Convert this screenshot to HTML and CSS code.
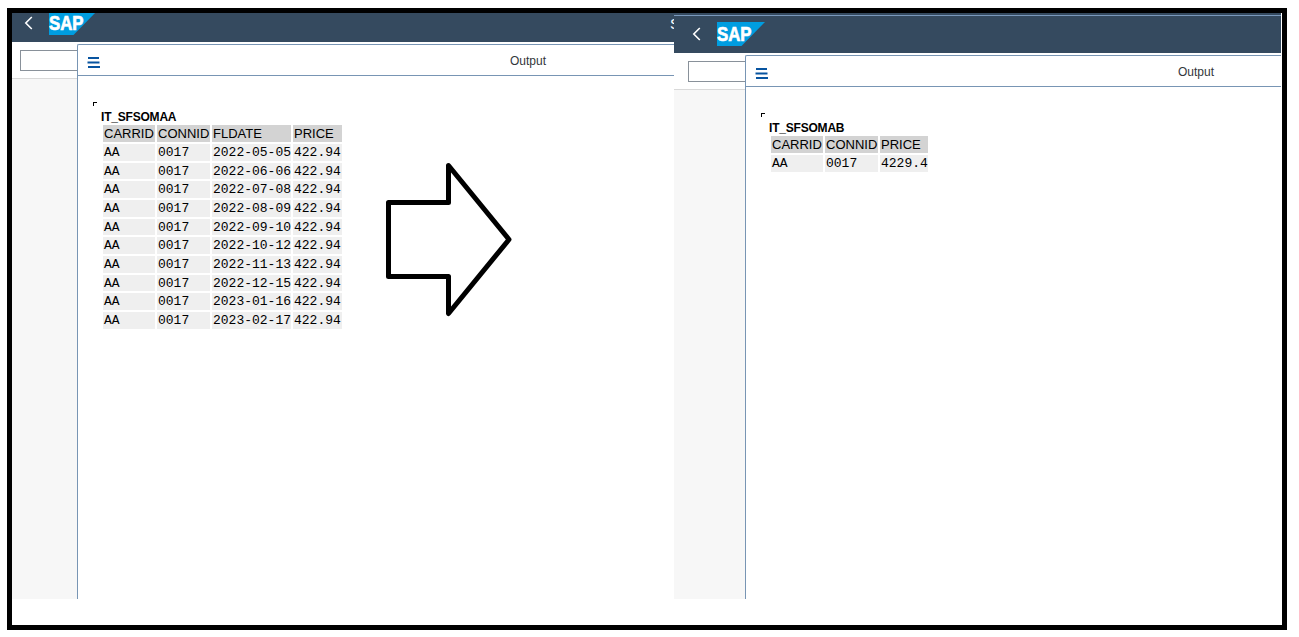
FILE: index.html
```
<!DOCTYPE html>
<html lang="en">
<head>
<meta charset="utf-8">
<title>Output</title>
<link rel="stylesheet" href="styles.css">
</head>
<body>
<main class="frame">
  <section class="panel panel-left">
    <div class="screen">
      <header class="shell">
        <svg class="back" width="10" height="14" viewBox="0 0 10 14"><path d="M7.800 1 1.800 7l6 6" fill="none" stroke="#fff" stroke-width="1.600"/></svg>
        <svg class="logo" width="48" height="24" viewBox="0 0 48 24"><path d="M0 0h48L24.500 24H0z" fill="#009de0"/><text x="0" y="18.500" textLength="34.500" lengthAdjust="spacingAndGlyphs">SAP</text></svg>
        <span class="shell-title">S</span>
      </header>
      <div class="work">
        <aside class="side"><div class="command"><div class="field"></div></div></aside>
        <div class="window">
          <div class="bar">
            <svg width="13" height="11" viewBox="0 0 13 11"><path d="M1 1h11M0.500 5.500h12M1 10h12" stroke="#0854a0" stroke-width="2"/></svg>
            <span class="bar-title">Output</span>
          </div>
          <div class="output">
            <i class="corner"></i>
            <h1>IT_SFSOMAA</h1>
            <div class="grid four">
              <b>CARRID</b><b>CONNID</b><b>FLDATE</b><b>PRICE</b>
              <span>AA</span><span>0017</span><span>2022-05-05</span><span>422.94</span>
              <span>AA</span><span>0017</span><span>2022-06-06</span><span>422.94</span>
              <span>AA</span><span>0017</span><span>2022-07-08</span><span>422.94</span>
              <span>AA</span><span>0017</span><span>2022-08-09</span><span>422.94</span>
              <span>AA</span><span>0017</span><span>2022-09-10</span><span>422.94</span>
              <span>AA</span><span>0017</span><span>2022-10-12</span><span>422.94</span>
              <span>AA</span><span>0017</span><span>2022-11-13</span><span>422.94</span>
              <span>AA</span><span>0017</span><span>2022-12-15</span><span>422.94</span>
              <span>AA</span><span>0017</span><span>2023-01-16</span><span>422.94</span>
              <span>AA</span><span>0017</span><span>2023-02-17</span><span>422.94</span>
            </div>
          </div>
        </div>
      </div>
    </div>
    <svg class="arrow" width="130" height="160" viewBox="0 0 130 160"><path d="M6.500 42.500H66.500V5.500L127 79.500 66.500 153.500V116.500H6.500z" fill="#fff" stroke="#000" stroke-width="5" stroke-linejoin="round"/></svg>
  </section>
  <section class="panel panel-right">
    <div class="screen">
      <header class="shell">
        <svg class="back" width="10" height="14" viewBox="0 0 10 14"><path d="M7.800 1 1.800 7l6 6" fill="none" stroke="#fff" stroke-width="1.600"/></svg>
        <svg class="logo" width="48" height="24" viewBox="0 0 48 24"><path d="M0 0h48L24.500 24H0z" fill="#009de0"/><text x="0" y="18.500" textLength="34.500" lengthAdjust="spacingAndGlyphs">SAP</text></svg>
      </header>
      <div class="work">
        <aside class="side"><div class="command"><div class="field"></div></div></aside>
        <div class="window">
          <div class="bar">
            <svg width="13" height="11" viewBox="0 0 13 11"><path d="M1 1h11M0.500 5.500h12M1 10h12" stroke="#0854a0" stroke-width="2"/></svg>
            <span class="bar-title">Output</span>
          </div>
          <div class="output">
            <i class="corner"></i>
            <h1>IT_SFSOMAB</h1>
            <div class="grid three">
              <b>CARRID</b><b>CONNID</b><b>PRICE</b>
              <span>AA</span><span>0017</span><span>4229.4</span>
            </div>
          </div>
        </div>
      </div>
    </div>
  </section>
</main>
</body>
</html>
```
FILE: styles.css
```
* { box-sizing: border-box; }
body {
  margin: 0;
  height: 637px;
  padding: 8px 0 0 7px;
  overflow: hidden;
  background: #fff;
  font-family: "Liberation Sans", Arial, sans-serif;
}
.frame {
  display: flex;
  width: 1280px;
  height: 622px;
  border: 5px solid #000;
}
.panel {
  position: relative;
  height: 586px;
  overflow: hidden;
  flex: none;
}
.panel-left { width: 662px; }
.panel-right { width: 607px; background: #354a5f; padding-top: 2px; }
.screen { height: 595px; display: flex; flex-direction: column; }
.panel-left .screen { margin-top: -9px; }
.panel-right .screen { height: 584px; }
.shell {
  display: flex;
  flex: none;
  height: 38px;
  padding-left: 11px;
  border-top: 1px solid #7b9abd;
  background: #354a5f;
}
.panel-right .shell { padding-left: 17px; }
.back { margin: 11px 0 0 1px; }
.logo { margin: 6px 0 0 15px; }
.logo text {
  fill: #fff;
  stroke: #fff;
  stroke-width: .7;
  font: bold 19.5px "Liberation Sans", Arial, sans-serif;
}
.shell-title {
  margin: 9px -20px 0 auto;
  width: 24px;
  flex: none;
  color: #fff;
  font-size: 15px;
  line-height: 20px;
}
.work { display: flex; flex: 1; min-height: 0; background: #fff; }
.side { width: 65px; flex: none; background: #f7f7f7; }
.panel-right .side { width: 71px; }
.command {
  height: 37px;
  padding: 8px 0 0 8px;
  border-bottom: 1px solid #d9d9d9;
  background: #fff;
}
.panel-right .command { padding-left: 14px; }
.field {
  height: 21px;
  border: 1px solid #89919a;
  border-right: 0;
}
.window {
  flex: 1;
  margin-top: 2px;
  border: solid #7895b4;
  border-width: 1px 0 0 1px;
  border-top-left-radius: 2px;
  overflow: hidden;
}
.bar {
  display: flex;
  width: 901px;
  height: 31px;
  padding: 12px 0 0 9px;
  border-bottom: 1px solid #7895b4;
}
.bar-title {
  margin: -3px 0 0 410px;
  color: #32363a;
  font-size: 12px;
  line-height: 14px;
}
.output { padding: 26px 0 0 15px; }
.corner {
  display: block;
  width: 4px;
  height: 4px;
  border: solid #000;
  border-width: 1px 0 0 1px;
}
h1 {
  margin: 4px 0 1px 8px;
  font-size: 12px;
  line-height: 14px;
  letter-spacing: -.2px;
}
.grid {
  display: grid;
  gap: 2px;
  margin-left: 10px;
  grid-template-rows: 17px;
  grid-auto-rows: 16.67px;
}
.four { grid-template-columns: 52px 53px 79px 49px; }
.three { grid-template-columns: 52px 53px 48px; }
.grid b, .grid span { padding-left: 1px; white-space: nowrap; }
.grid b {
  background: #d3d3d3;
  font-weight: 400;
  font-size: 13px;
  line-height: 17px;
}
.grid span {
  background: #efefef;
  font: 13px/17px "Liberation Mono", "Courier New", monospace;
}
.arrow { position: absolute; left: 370px; top: 147px; }
```
